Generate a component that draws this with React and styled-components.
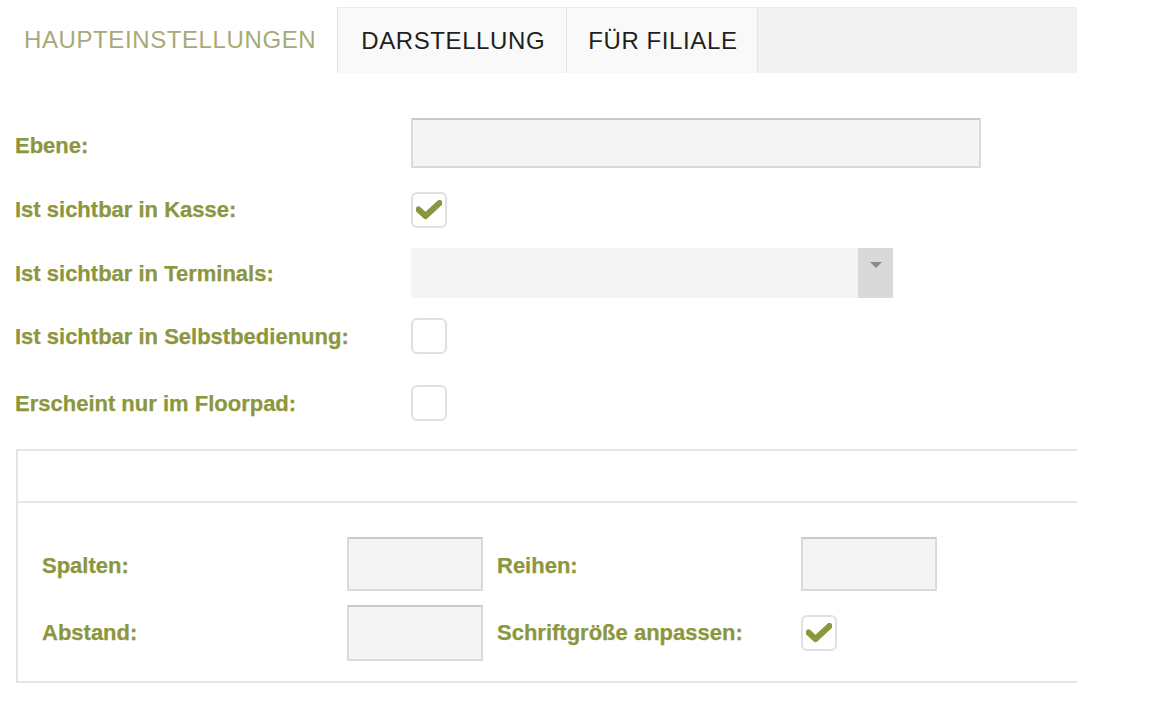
import React from "react";
import styled, { createGlobalStyle } from "styled-components";

const Global = createGlobalStyle`
  html, body { margin: 0; padding: 0; background: #ffffff; }
  body { font-family: "Liberation Sans", Arial, Helvetica, sans-serif; }
  * { box-sizing: border-box; }
`;

const Page = styled.div`
  width: 1077px;
  padding-top: 7px;
`;

const TabBar = styled.div`
  display: flex;
  height: 66px;
`;

const Tab = styled.div`
  display: flex;
  align-items: center;
  height: 100%;
  padding: 0 ${(p) => p.$pr}px 0 ${(p) => p.$pl}px;
  font-size: 24px;
  letter-spacing: 0.6px;
  color: ${(p) => (p.$active ? "#a8a978" : "#1f1f1f")};
  background: ${(p) => (p.$active ? "#ffffff" : "#f9f9f9")};
  border-right: ${(p) => (p.$active ? "none" : "1px solid #e3e3e3")};
  white-space: nowrap;
`;

const TabStrip = styled.div`
  flex: 1;
  display: flex;
  background: #f2f2f2;
  border-top: 1px solid #ebebeb;
  border-left: 1px solid #e3e3e3;
`;

const Form = styled.div`
  display: flex;
  flex-direction: column;
  padding: 45px 0 0 15px;
`;

const Row = styled.div`
  display: flex;
  align-items: center;
  margin-top: ${(p) => p.$top || 0}px;
`;

const Label = styled.div`
  width: ${(p) => p.$width || 396}px;
  flex-shrink: 0;
  padding-top: ${(p) => p.$offset || 0}px;
  font-size: 22px;
  font-weight: bold;
  color: #8c963e;
  -webkit-text-stroke: 0.25px #8c963e;
  white-space: nowrap;
`;

const TextInput = styled.div`
  width: ${(p) => p.$width}px;
  height: ${(p) => p.$height}px;
  background: #f4f4f4;
  border: 2px solid #dadada;
  border-top-color: #c9c9c9;
`;

const Select = styled.div`
  display: flex;
  width: 482px;
  height: 50px;
  background: #f4f4f4;
`;

const SelectValue = styled.div`
  flex: 1;
`;

const SelectArrow = styled.div`
  width: 35px;
  background: #d9d9d9;
  display: flex;
  justify-content: center;
  padding-top: 14px;
`;

const Checkbox = styled.div`
  width: 36px;
  height: 36px;
  border: 2px solid #e0e0e0;
  border-radius: 6px;
  background: #ffffff;
  display: flex;
  align-items: center;
  justify-content: center;
`;

const Panel = styled.div`
  margin: 28px 0 0 16px;
  width: 1061px;
  border: 2px solid #e5e5e5;
  border-right: none;
`;

const PanelHeader = styled.div`
  height: 52px;
  border-bottom: 2px solid #e5e5e5;
`;

const PanelBody = styled.div`
  display: grid;
  grid-template-columns: 291px 136px 290px 136px;
  column-gap: 14px;
  row-gap: 14px;
  align-items: center;
  padding: 34px 24px 20px 24px;
`;

const Check = () => (
  <svg width="26" height="20" viewBox="0 0 26 20">
    <path
      d="M2.5 9.5 L9.5 16 L23.5 3"
      fill="none"
      stroke="#8c963e"
      strokeWidth="6"
      strokeLinecap="round"
      strokeLinejoin="round"
    />
  </svg>
);

const Triangle = () => (
  <svg width="12" height="6" viewBox="0 0 12 6">
    <path d="M0 0 L12 0 L6 6 Z" fill="#8a8a8a" />
  </svg>
);

const CheckField = ({ checked }) => (
  <Checkbox>{checked ? <Check /> : null}</Checkbox>
);

export default function App() {
  return (
    <>
      <Global />
      <Page>
        <TabBar>
          <Tab $active $pl={24} $pr={21}>HAUPTEINSTELLUNGEN</Tab>
          <TabStrip>
            <Tab $pl={23} $pr={21}>DARSTELLUNG</Tab>
            <Tab $pl={21} $pr={19}>FÜR FILIALE</Tab>
          </TabStrip>
        </TabBar>

        <Form>
          <Row>
            <Label $offset={6}>Ebene:</Label>
            <TextInput $width={570} $height={50} />
          </Row>
          <Row $top={24}>
            <Label>Ist sichtbar in Kasse:</Label>
            <CheckField checked />
          </Row>
          <Row $top={20}>
            <Label $offset={2}>Ist sichtbar in Terminals:</Label>
            <Select>
              <SelectValue />
              <SelectArrow>
                <Triangle />
              </SelectArrow>
            </Select>
          </Row>
          <Row $top={20}>
            <Label $offset={2}>Ist sichtbar in Selbstbedienung:</Label>
            <CheckField />
          </Row>
          <Row $top={31}>
            <Label $offset={2}>Erscheint nur im Floorpad:</Label>
            <CheckField />
          </Row>
        </Form>

        <Panel>
          <PanelHeader />
          <PanelBody>
            <Label $width={291} $offset={3}>Spalten:</Label>
            <TextInput $width={136} $height={54} />
            <Label $width={290} $offset={3}>Reihen:</Label>
            <TextInput $width={136} $height={54} />
            <Label $width={291}>Abstand:</Label>
            <TextInput $width={136} $height={56} />
            <Label $width={290}>Schriftgröße anpassen:</Label>
            <CheckField checked />
          </PanelBody>
        </Panel>
      </Page>
    </>
  );
}
